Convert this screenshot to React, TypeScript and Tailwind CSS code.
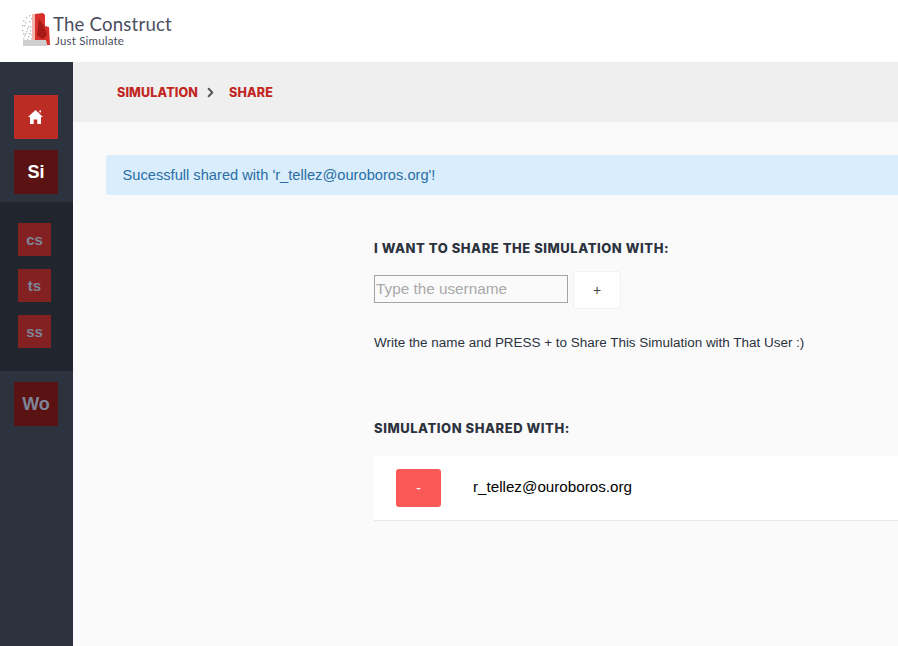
import { ChevronRight } from "lucide-react";

const sans = "font-['Liberation_Sans',Arial,sans-serif]";

function Logo() {
  const dots = [
    [2, 8], [5, 5], [8, 9], [3, 13], [7, 14], [10, 6], [1, 18], [5, 19], [9, 18], [11, 12],
    [3, 23], [7, 24], [10, 22], [2, 26], [6, 27], [10, 26], [8, 3], [4, 10], [6, 16], [9, 14],
    [4, 21], [11, 3], [1, 13], [2, 21], [8, 21], [11, 18],
  ];
  return (
    <svg width="32" height="36" viewBox="0 0 32 36" className="shrink-0">
      {dots.map(([x, y]) => (
        <rect key={`${x}-${y}`} x={x} y={y} width="1.4" height="1.4" fill="#bdbdbd" />
      ))}
      <path d="M2 28 L25 28 L26 34 L2 34 Z" fill="#cfcfcf" />
      <path d="M11 2 L14 2 L14 28 L11 28 Z" fill="#f3b5ae" />
      <path d="M14 2 L22 1 L24 3 L24 14 L28 15 L29 33 L26 33 L25 28 L14 28 Z" fill="#d8302a" />
      <path d="M18 7 L23 14 L26 23 L22 27 L16 24 Z" fill="#a81a16" />
    </svg>
  );
}

function HomeIcon() {
  return (
    <svg width="15" height="14" viewBox="0 0 15 14" fill="currentColor" className="-ml-[1px]">
      <path d="M7.5 0 L15 7 L13 7 L13 14 L9.3 14 L9.3 9.5 L5.7 9.5 L5.7 14 L2 14 L2 7 L0 7 Z" />
      <rect x="11.4" y="0.4" width="1.6" height="2" />
    </svg>
  );
}

function SideSquare({ label, dim }: { label: string; dim?: boolean }) {
  return (
    <div
      className={`w-11 h-11 flex items-center justify-center font-bold text-lg bg-[#5a1212] ${
        dim ? "text-[#7e8598]" : "text-white"
      }`}
    >
      {label}
    </div>
  );
}

function SubSquare({ label }: { label: string }) {
  return (
    <div className="w-[33px] h-[33px] pt-[1px] flex items-center justify-center bg-[#832022] text-[#7e8598] font-bold text-[15px]">
      {label}
    </div>
  );
}

function Heading({ children }: { children: string }) {
  return (
    <h2 className="font-['Inter',sans-serif] font-extrabold text-[13px] h-4 leading-[14px] tracking-[0.55px] text-[#2c323e]">
      {children}
    </h2>
  );
}

export default function App() {
  return (
    <div className={`w-[898px] h-[646px] overflow-hidden flex flex-col bg-[#fafafa] ${sans}`}>
      {/* Top bar */}
      <header className="h-[62px] shrink-0 bg-white flex items-start pl-[21px] pt-[12px]">
        <Logo />
        <div className="flex flex-col">
          <span className="font-['Lato',sans-serif] text-[18.6px] leading-[24px] text-[#4a4e5e] tracking-[0.2px]">
            The Construct
          </span>
          <span className="font-['Lato',sans-serif] text-[11.5px] leading-[10px] pl-[2px] text-[#4a4e5e] tracking-[0.2px]">
            Just Simulate
          </span>
        </div>
      </header>

      <div className="flex flex-1 min-h-0">
        {/* Sidebar */}
        <aside className="w-[73px] shrink-0 bg-[#2c323e] flex flex-col pt-[33px]">
          <div className="pl-[14px] flex flex-col gap-[11px]">
            <div className="w-11 h-11 flex items-center justify-center bg-[#bb2d24] text-white">
              <HomeIcon />
            </div>
            <SideSquare label="Si" />
          </div>
          <div className="mt-2 h-[169px] bg-[#21262e] pl-[18px] pt-[21px] flex flex-col gap-[13px]">
            <SubSquare label="cs" />
            <SubSquare label="ts" />
            <SubSquare label="ss" />
          </div>
          <div className="pl-[14px] mt-[11px]">
            <SideSquare label="Wo" dim />
          </div>
        </aside>

        <main className="flex-1 min-w-0 flex flex-col">
          {/* Breadcrumb */}
          <div className="h-[60px] shrink-0 bg-[#efefef] pl-[44px] pt-[3px] flex items-center font-['Inter',sans-serif] font-extrabold text-[12.5px] tracking-[0.15px] text-[#c1271f]">
            <span>SIMULATION</span>
            <ChevronRight size={15} strokeWidth={3} className="text-[#555555] ml-[5px] mr-[11px] -mt-[3px]" />
            <span>SHARE</span>
          </div>

          <div className="pt-[33px] pl-[33px]">
            <div className="h-10 rounded-l-[3px] bg-[#d9edfc] text-[#2a6ea5] text-[14.67px] flex items-center pl-[16.5px]">
              Sucessfull shared with 'r_tellez@ouroboros.org'!
            </div>

            <section className="ml-[268px] mt-[46px]">
              <Heading>I WANT TO SHARE THE SIMULATION WITH:</Heading>
              <div className="flex items-start gap-[5px] mt-[14px]">
                <input
                  type="text"
                  placeholder="Type the username"
                  className="w-[194px] h-[28px] mt-[4px] border border-[#a3a3a3] bg-transparent px-[1px] pb-[1px] text-[15.3px] placeholder:text-[#a9a9a9] outline-none"
                />
                <button className="w-[48px] h-[38px] bg-white border border-[#f1f1f1] rounded-[3px] text-[#444] text-sm">
                  +
                </button>
              </div>
              <p className="mt-[25px] text-[13.46px] leading-[18px] text-[#2c323e]">
                Write the name and PRESS + to Share This Simulation with That User :)
              </p>

              <div className="mt-[69px]">
                <Heading>SIMULATION SHARED WITH:</Heading>
              </div>
              <div className="mt-[19px] h-[65px] bg-white border-b border-[#e8e8e8] flex items-center pl-[22px]">
                <button className="w-[45px] h-[38px] rounded-[3px] bg-[#fb5858] text-white text-sm">
                  -
                </button>
                <span className="ml-[32px] pb-[2px] text-[15.2px] text-black">r_tellez@ouroboros.org</span>
              </div>
            </section>
          </div>
        </main>
      </div>
    </div>
  );
}
